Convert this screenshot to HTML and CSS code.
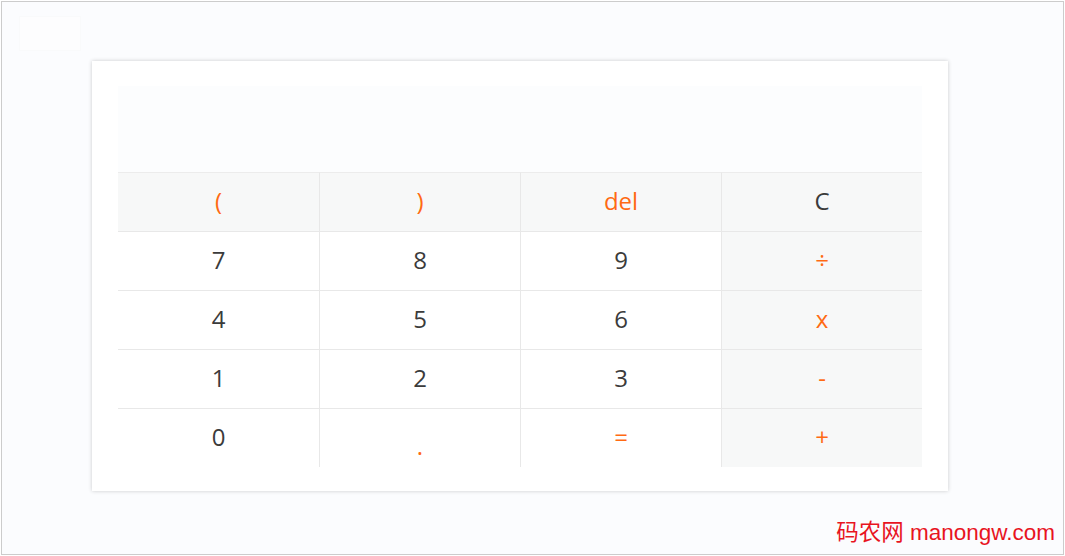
FILE: index.html
```html
<!DOCTYPE html>
<html lang="zh">
<head>
<meta charset="utf-8">
<title>Calculator</title>
<link rel="stylesheet" href="styles.css">
</head>
<body>
<div class="page">
  <div class="logo-box"></div>
  <div class="card">
    <div class="display"></div>
    <div class="keys">
      <div class="key fn op">(</div>
      <div class="key fn op">)</div>
      <div class="key fn op">del</div>
      <div class="key fn side">C</div>
      <div class="key">7</div>
      <div class="key">8</div>
      <div class="key">9</div>
      <div class="key side op">÷</div>
      <div class="key">4</div>
      <div class="key">5</div>
      <div class="key">6</div>
      <div class="key side op">x</div>
      <div class="key">1</div>
      <div class="key">2</div>
      <div class="key">3</div>
      <div class="key side op">-</div>
      <div class="key">0</div>
      <div class="key op dot">.</div>
      <div class="key op">=</div>
      <div class="key side op">+</div>
    </div>
  </div>
  <div class="watermark">码农网 manongw.com</div>
</div>
</body>
</html>
```
FILE: styles.css
```css
html, body {
  margin: 0;
  padding: 0;
  background: #ffffff;
}
body {
  width: 1065px;
  height: 556px;
  overflow: hidden;
}
.page {
  position: relative;
  box-sizing: border-box;
  margin: 1px;
  width: 1063px;
  height: 554px;
  border: 1px solid #cccccc;
  background: #fbfcfe;
  padding: 59px 0 0 90px;
  font-family: "Open Sans", "Noto Sans", sans-serif;
}
.logo-box {
  position: absolute;
  left: 17px;
  top: 14px;
  width: 62px;
  height: 35px;
  background: #fdfdfe;
  border: 1px solid #f9fafb;
  box-sizing: border-box;
}
.card {
  width: 856px;
  height: 430px;
  box-sizing: border-box;
  background: #ffffff;
  padding: 25px 26px 24px 26px;
  box-shadow: 0 0 4px rgba(0, 0, 0, 0.2);
}
.display {
  height: 86px;
  background: #fcfdfe;
}
.keys {
  display: grid;
  grid-template-columns: repeat(4, 201px);
  grid-auto-rows: 59px;
}
.key {
  display: flex;
  align-items: center;
  justify-content: center;
  border-top: 1px solid #e8e8e8;
  border-left: 1px solid #e8e8e8;
  font-size: 24px;
  color: #3b3b3b;
  padding-bottom: 3px;
  box-sizing: border-box;
}
.key:nth-child(4n+1) {
  border-left: none;
}
.key:nth-child(-n+4) {
  border-top-color: #ececec;
}
.fn, .side {
  background: #f7f8f8;
}
.op {
  color: #ff6a13;
}
.dot {
  padding-top: 14px;
  padding-bottom: 0;
}
.watermark {
  position: absolute;
  right: 8px;
  bottom: 9px;
  color: #e8141e;
  font-family: "Liberation Sans", "Noto Sans CJK SC", sans-serif;
  font-size: 22.5px;
  line-height: 24px;
}
```
